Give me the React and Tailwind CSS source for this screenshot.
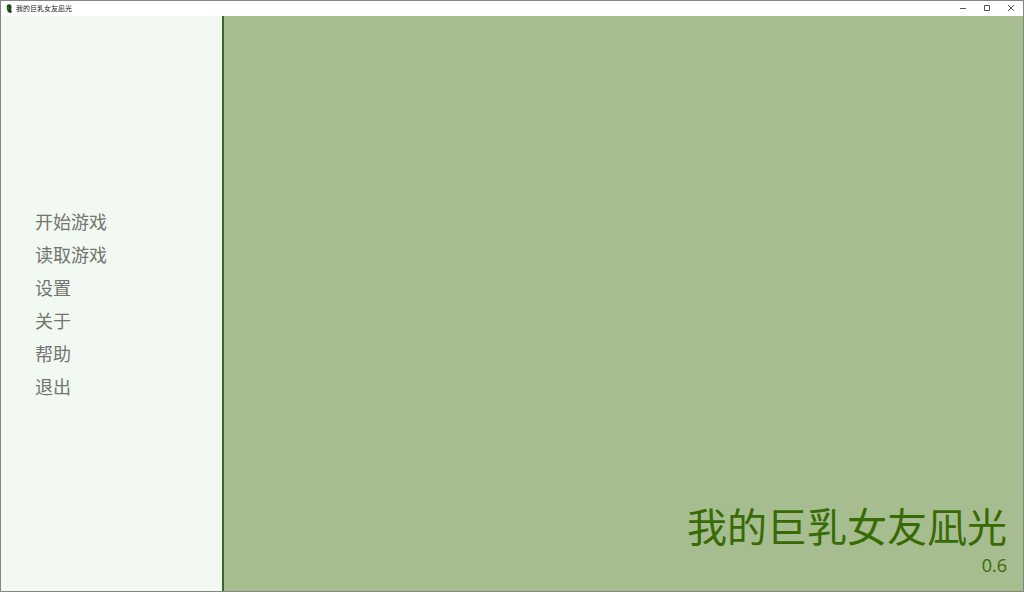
import { useEffect } from 'react'

const GAME_TITLE = '我的巨乳女友凪光'
const GAME_VERSION = '0.6'
const MENU_ITEMS = ['开始游戏', '读取游戏', '设置', '关于', '帮助', '退出']

export default function App() {
  useEffect(() => {
    document.title = GAME_TITLE
  }, [])

  return (
    <div className="flex min-h-screen flex-col border border-[#858585] bg-[#a5bd8f] font-['Open_Sans','Noto_Sans_CJK_SC',sans-serif]">
      <TitleBar />
      <div className="flex flex-1">
        <MainMenu />
        <main className="flex flex-1 flex-col items-end justify-end px-4 pb-[14px] text-[#386a05]">
          <h1 className="text-[40px] leading-[52px]">{GAME_TITLE}</h1>
          <p className="text-[18px] leading-[24px]">{GAME_VERSION}</p>
        </main>
      </div>
    </div>
  )
}

/* ========== Window ========== */
function TitleBar() {
  return (
    <header className="flex h-[15px] items-center bg-white pl-1 text-[#555555]">
      <AppIcon />
      <span className="ml-[2px] flex-1 text-[7px] leading-[14px] text-[#222222]">{GAME_TITLE}</span>
      <WindowButton label="最小化">
        <path d="M2 5.5h6" />
      </WindowButton>
      <WindowButton label="最大化">
        <path d="M2.5 2.5h5v5h-5z" />
      </WindowButton>
      <WindowButton label="关闭">
        <path d="M2 2l6 6M8 2l-6 6" />
      </WindowButton>
    </header>
  )
}

function WindowButton({ label, children }) {
  return (
    <button
      type="button"
      aria-label={label}
      className="flex h-full w-6 items-start justify-center pt-[2px] hover:bg-black/10"
    >
      <svg width="10" height="10" viewBox="0 0 10 10" fill="none" stroke="currentColor">
        {children}
      </svg>
    </button>
  )
}

function AppIcon() {
  return (
    <svg width="9" height="10" viewBox="0 0 9 10" aria-hidden="true">
      <path d="M2 1Q3 .2 4.8.2 6.6.6 6.6 3L6.2 5.6 6.8 8.2 5.6 9 3.6 8.6 2.4 6.8 1.6 4z" fill="#1d4a12" />
      <path d="M2.2 3l1.2-.4.6 1.8-.8 1.2-.8-.8z" fill="#4a7a28" />
    </svg>
  )
}

/* ========== Menu ========== */
function MainMenu() {
  return (
    <nav className="flex w-[223px] shrink-0 flex-col justify-center border-r-2 border-[#386a1c] bg-[#f2f8f2] pt-[2px] pl-[34px]">
      {MENU_ITEMS.map((item) => (
        <button
          key={item}
          type="button"
          className="h-[33px] cursor-pointer text-left text-[18px] text-[#72766f] hover:text-[#386a05]"
        >
          {item}
        </button>
      ))}
    </nav>
  )
}
